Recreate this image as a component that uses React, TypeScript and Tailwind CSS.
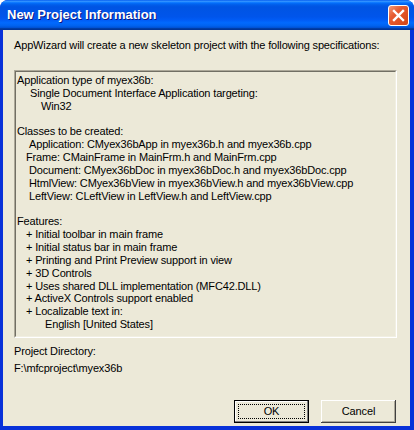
import React from 'react';

const LINES: { text: string; indent: number }[] = [
  { text: 'Application type of myex36b:', indent: 0 },
  { text: 'Single Document Interface Application targeting:', indent: 13 },
  { text: 'Win32', indent: 24 },
  { text: '', indent: 0 },
  { text: 'Classes to be created:', indent: 0 },
  { text: 'Application: CMyex36bApp in myex36b.h and myex36b.cpp', indent: 12 },
  { text: 'Frame: CMainFrame in MainFrm.h and MainFrm.cpp', indent: 9 },
  { text: 'Document: CMyex36bDoc in myex36bDoc.h and myex36bDoc.cpp', indent: 12 },
  { text: 'HtmlView: CMyex36bView in myex36bView.h and myex36bView.cpp', indent: 12 },
  { text: 'LeftView: CLeftView in LeftView.h and LeftView.cpp', indent: 12 },
  { text: '', indent: 0 },
  { text: 'Features:', indent: 0 },
  { text: '+ Initial toolbar in main frame', indent: 9 },
  { text: '+ Initial status bar in main frame', indent: 9 },
  { text: '+ Printing and Print Preview support in view', indent: 9 },
  { text: '+ 3D Controls', indent: 9 },
  { text: '+ Uses shared DLL implementation (MFC42.DLL)', indent: 9 },
  { text: '+ ActiveX Controls support enabled', indent: 9 },
  { text: '+ Localizable text in:', indent: 9 },
  { text: 'English [United States]', indent: 28 },
];

const CloseButton = () => (
  <div className="w-[21px] h-[21px] rounded-[3px] border border-white bg-[linear-gradient(135deg,#f59a78_0%,#e65c32_35%,#d44515_100%)] flex items-center justify-center">
    <svg width="13" height="13" viewBox="0 0 13 13">
      <path d="M2 2 L11 11 M11 2 L2 11" stroke="#fff" strokeWidth="2.4" strokeLinecap="square" />
    </svg>
  </div>
);

export default function App() {
  return (
    <div className="w-[414px] h-[430px] bg-white font-['Liberation_Sans',Arial,sans-serif] text-[11px] tracking-[-0.15px] text-black">
      <div className="h-full flex flex-col rounded-t-[8px] overflow-hidden bg-[#0831d9]">
        {/* Title bar */}
        <div className="h-[30px] shrink-0 flex items-center justify-between pl-[7px] pr-[5px] bg-[linear-gradient(to_bottom,#0058ee_0%,#3593ff_4%,#288eff_6%,#127dff_8%,#036ffc_10%,#0262ee_14%,#0057e5_20%,#0054e3_24%,#0055eb_56%,#005bf5_66%,#026afe_76%,#0062ef_86%,#0052d6_92%,#0040ab_94%,#003092_100%)]">
          <span className="text-white font-bold text-[13px] tracking-normal [text-shadow:1px_1px_#0a1883]">
            New Project Information
          </span>
          <CloseButton />
        </div>

        {/* Body */}
        <div className="flex-1 flex flex-col ml-[3px] mr-[4px] mb-[4px] bg-[#ece9d8] pl-[11px] pr-[13px] pt-[9px]">
          <div className="leading-[13px]">
            AppWizard will create a new skeleton project with the following specifications:
          </div>

          <div className="mt-[18px] h-[268px] border border-t-[#aca899] border-l-[#aca899] border-b-white border-r-white">
            <div className="h-full border border-t-[#716f64] border-l-[#716f64] border-b-[#f1efe2] border-r-[#f1efe2] pt-[2px] pl-[1px]">
              {LINES.map((l, i) => (
                <div key={i} className="h-[12.85px] leading-[13px] whitespace-nowrap" style={{ paddingLeft: l.indent }}>
                  {l.text}
                </div>
              ))}
            </div>
          </div>

          <div className="mt-[7px] leading-[13px]">Project Directory:</div>
          <div className="mt-[4px] leading-[13px]">F:\mfcproject\myex36b</div>

          <div className="mt-[25px] flex justify-end gap-[12px] pr-[1px]">
            <button className="w-[75px] h-[23px] border border-black bg-[#ece9d8] shadow-[inset_-1px_-1px_#808080,inset_1px_1px_#fff] p-[3px]">
              <div className="h-full border border-dotted border-black flex items-center justify-center">OK</div>
            </button>
            <button className="w-[75px] h-[23px] bg-[#ece9d8] shadow-[inset_-1px_-1px_#404040,inset_1px_1px_#fff,inset_-2px_-2px_#aca899] flex items-center justify-center">
              Cancel
            </button>
          </div>
        </div>
      </div>
    </div>
  );
}
